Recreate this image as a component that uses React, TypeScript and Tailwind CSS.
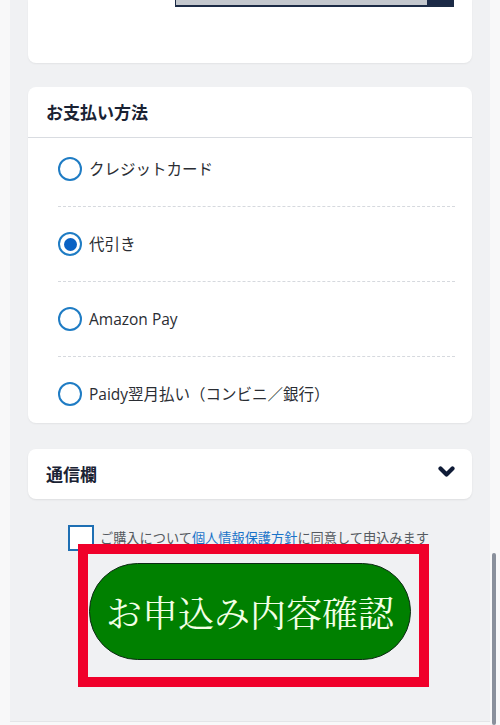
import React from "react";

const jp = { fontFamily: '"Noto Sans CJK JP", "Noto Sans", sans-serif' };
const mixed = { fontFamily: '"Open Sans", "Noto Sans CJK JP", sans-serif' };

function Radio({ checked }: { checked?: boolean }) {
  return (
    <span className="flex h-[24px] w-[24px] shrink-0 items-center justify-center rounded-full border-2 border-[#1f7cc4] bg-white">
      {checked && <span className="h-[13px] w-[13px] rounded-full bg-[#0a62c4]" />}
    </span>
  );
}

const options = [
  { label: "クレジットカード", checked: false, pt: "pt-[19px]", pb: "pb-[25px]" },
  { label: "代引き", checked: true, pt: "pt-[25px]", pb: "pb-[25px]" },
  { label: "Amazon Pay", checked: false, pt: "pt-[25px]", pb: "pb-[25px]" },
  { label: "Paidy翌月払い（コンビニ／銀行）", checked: false, pt: "pt-[25px]", pb: "pb-[17px]" },
];

export default function App() {
  return (
    <div className="relative h-[725px] w-[500px] overflow-hidden bg-[#f8f8f9]" style={jp}>
      <div className="ml-[10px] h-[721px] w-[480px] bg-[#f0f1f3] px-[18px]">
        {/* Card 1 (cut off) */}
        <div className="h-[63px] rounded-b-[8px] bg-white shadow-[0_1px_2px_rgba(0,0,0,0.06)]">
          <div className="ml-[147px] mr-[18px] flex h-[7px] border-x border-b-2 border-[#1c2b45] bg-[#c4c8ce]">
            <div className="flex-1" />
            <div className="w-[26px] bg-[#1b2a47]" />
          </div>
        </div>

        {/* Card 2 */}
        <div className="mt-[24px] rounded-[8px] bg-white shadow-[0_1px_2px_rgba(0,0,0,0.06)]">
          <div className="flex h-[51px] items-center border-b border-[#d9dce1] px-[18px]">
            <span className="text-[17px] font-bold text-[#1a2233]">お支払い方法</span>
          </div>
          <div className="pl-[30px] pr-[17px]">
            {options.map((o, i) => (
              <div
                key={o.label}
                className={`flex items-center gap-[7px] ${o.pt} ${o.pb} ${i < options.length - 1 ? "border-b border-dashed border-[#d6d9de]" : ""}`}
              >
                <Radio checked={o.checked} />
                <span className="text-[15.5px] leading-[24px] text-[#2a2d33]" style={mixed}>
                  {o.label}
                </span>
              </div>
            ))}
          </div>
        </div>

        {/* Card 3 */}
        <div className="mt-[26px] flex h-[50px] items-center justify-between rounded-[8px] bg-white px-[18px] shadow-[0_1px_2px_rgba(0,0,0,0.08)]">
          <span className="text-[17px] font-bold text-[#1a2233]">通信欄</span>
          <svg width="17" height="12" viewBox="0 0 17 12" className="mr-[-1px] mt-[-5px]">
            <polyline
              points="2.5,2.5 8.5,8.5 14.5,2.5"
              fill="none"
              stroke="#0f1b36"
              strokeWidth="4.2"
              strokeLinecap="round"
              strokeLinejoin="round"
            />
          </svg>
        </div>

        {/* Agreement */}
        <div className="mt-[26px] flex items-center gap-[6px] pl-[40px]">
          <span className="h-[26px] w-[26px] shrink-0 border-2 border-[#1e6fb3] bg-white" />
          <span className="whitespace-nowrap text-[13.2px] leading-[24px] text-[#555a60]">
            ご購入について
            <span className="text-[#1a73c8] underline">個人情報保護方針</span>
            に同意して申込みます
          </span>
        </div>

        {/* Button */}
        <div className="mt-[12px] flex justify-center">
          <button
            className="flex h-[97px] w-[322px] items-center justify-center rounded-full border border-[#0d2a14] bg-[#008000] text-[36px] text-[#f2ffe6]"
            style={{ fontFamily: '"Noto Serif CJK JP", "Liberation Serif", serif' }}
          >
            お申込み内容確認
          </button>
        </div>
      </div>

      {/* Red annotation box */}
      <div className="absolute left-[78px] top-[544px] h-[143px] w-[351px] border-[10px] border-[#f0002a]" />

      {/* Scrollbar */}
      <div className="absolute left-[492px] top-[553px] h-[172px] w-[4px] rounded-[2px] bg-[#8a909c]" />
      {/* bottom line */}
      <div className="absolute left-[10px] top-[721px] h-px w-[480px] bg-[#e4e5e8]" />
    </div>
  );
}
